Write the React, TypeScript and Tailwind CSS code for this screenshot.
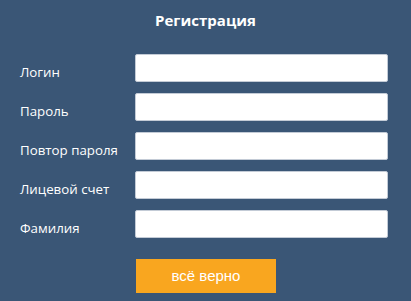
import React from 'react';

const fields = ['Логин', 'Пароль', 'Повтор пароля', 'Лицевой счет', 'Фамилия'];

const App: React.FC = () => {
  return (
    <div className="h-[301px] w-full bg-[#3a5676] font-['Open_Sans',sans-serif] text-white overflow-hidden">
      {/* Заголовок */}
      <h1 className="pt-[10px] h-[54px] text-center text-[15px] font-bold leading-[20px]">Регистрация</h1>

      {/* Поля */}
      <div className="flex flex-col gap-[11px]">
        {fields.map((label) => (
          <div key={label} className="flex items-center h-[28px]">
            <label className="w-[135px] pl-[20px] pt-[7px] text-[13.3px] leading-[20px]">{label}</label>
            <input
              type="text"
              className="w-[253px] h-[28px] bg-white border border-[#c3cbd6] rounded-[2px] outline-none text-black text-[13px] px-2"
            />
          </div>
        ))}
      </div>

      {/* Кнопка */}
      <div className="pl-[136px] pt-[21px]">
        <button className="w-[140px] h-[34px] bg-[#f9a61f] text-white font-['Liberation_Sans',sans-serif] text-[15px] leading-[20px]">
          всё верно
        </button>
      </div>
    </div>
  );
};

export default App;
